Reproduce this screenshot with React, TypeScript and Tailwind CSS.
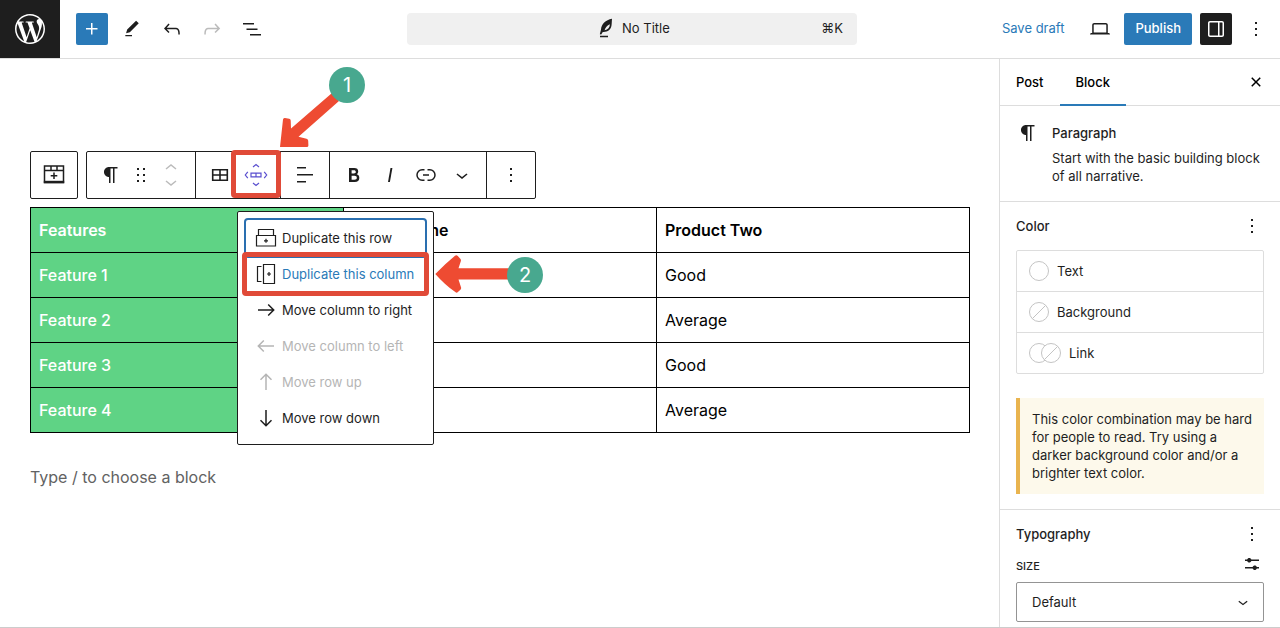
import type { ReactNode } from 'react'
import { SiWordpress } from 'react-icons/si'

const paths = {
  plus: 'M11 12.5V17.5H12.5V12.5H17.5V11H12.5V6H11V11H6V12.5H11Z',
  edit: 'M20.1 5.1L16.9 2 6.2 12.7l-1.3 4.4 4.5-1.3L20.1 5.1zM4 20.8h8v-1.5H4v1.5z',
  undo: 'M18.3 11.7c-.6-.6-1.4-.9-2.3-.9H6.7l2.9-3.3-1.1-1-4.5 5L8.5 16l1-1-2.7-2.7H16c.5 0 .9.2 1.3.5 1 1 1 3.4 1 4.5v.3h1.5v-.2c0-1.5 0-4.3-1.5-5.7z',
  redo: 'M15.6 6.5l-1.1 1 2.9 3.3H8c-.9 0-1.7.3-2.3.9-1.4 1.5-1.4 4.2-1.4 5.6v.2h1.5v-.3c0-1.1 0-3.5 1-4.5.3-.3.7-.5 1.3-.5h9.2L14.5 15l1.1 1.1 4.6-4.6-4.6-5z',
  listView: 'M3 6h11v1.5H3V6Zm3.5 5.5h11V13h-11v-1.5ZM21 17H10v1.5h11V17Z',
  desktop: 'M20.5 16h-.7V8c0-1.1-.9-2-2-2H6.2c-1.1 0-2 .9-2 2v8h-.7c-.8 0-1.5.7-1.5 1.5h20c0-.8-.7-1.5-1.5-1.5zM5.7 8c0-.3.2-.5.5-.5h11.6c.3 0 .5.2.5.5v7.6H5.7V8z',
  drawer: 'M18 4H6c-1.1 0-2 .9-2 2v12c0 1.1.9 2 2 2h12c1.1 0 2-.9 2-2V6c0-1.1-.9-2-2-2zm-4 14.5H6c-.3 0-.5-.2-.5-.5V6c0-.3.2-.5.5-.5h8v13zm4.5-.5c0 .3-.2.5-.5.5h-2.5v-13H18c.3 0 .5.2.5.5v12z',
  more: 'M13 19h-2v-2h2v2zm0-6h-2v-2h2v2zm0-6h-2V5h2v2z',
  close: 'M12 13.06l3.712 3.713 1.061-1.06L13.061 12l3.712-3.712-1.06-1.06L12 10.938 8.288 7.227l-1.061 1.06L10.939 12l-3.712 3.712 1.06 1.061L12 13.061z',
  paragraph: 'm9.996 14v-.225l.004 0v6.225h1.5v-14.5h2.5v14.5h1.5v-14.5h3v-1.5h-8.504c-2.761 0-5 2.239-5 5 0 2.761 2.239 5 5 5z',
  drag: 'M8 7h2V5H8v2zm0 6h2v-2H8v2zm0 6h2v-2H8v2zm6-14v2h2V5h-2zm0 8h2v-2h-2v2zm0 6h2v-2h-2v2z',
  chevronDown: 'M17.5 11.6L12 16l-5.5-4.4.9-1.2L12 14l4.5-3.6 1 1.2z',
  alignLeft: 'M13 5.5H4V4h9v1.5Zm7 7H4V11h16v1.5Zm-7 7H4V18h9v1.5Z',
  bold: 'M14.7 11.3c1-.6 1.5-1.6 1.5-3 0-2.3-1.3-3.4-4-3.4H7v14h5.8c1.4 0 2.5-.3 3.3-1 .8-.7 1.2-1.7 1.2-2.9.1-1.9-.8-3.1-2.6-3.7zm-5.1-4h2.3c.6 0 1.1.1 1.4.4.3.3.5.7.5 1.2s-.2 1-.5 1.2c-.3.3-.8.4-1.4.4H9.6V7.3zm4.6 9c-.4.3-1 .4-1.7.4H9.6v-3.9h2.9c.7 0 1.3.2 1.7.5.4.3.6.8.6 1.5s-.2 1.2-.6 1.5z',
  italic: 'M12.5 5L10 19h1.9l2.5-14z',
  settings: 'm19 7.5h-7.628c-.309-.874-1.142-1.5-2.122-1.5-.98 0-1.813.626-2.122 1.5h-2.128v1.5h2.128c.309.874 1.142 1.5 2.122 1.5.98 0 1.813-.626 2.122-1.5h7.628z M19 15h-2.128c-.309-.874-1.142-1.5-2.122-1.5s-1.813.626-2.122 1.5h-7.628v1.5h7.628c.309.874 1.142 1.5 2.122 1.5s1.813-.626 2.122-1.5h2.128z',
  feather: 'M18 1.800C11.500 3 7.400 7 7 12.500L5.800 17.200l1.400.4 1.600-2.600c5 .3 8-2.300 8.700-6.400.3-2 .3-4.600.5-6.800zM15.900 7.200c-.1 3.300-1.900 5.500-5.300 6 .6-2.300 2.600-4.800 5.300-6zM6 18.700h8v1.500H6z',
}

interface IconProps {
  name: keyof typeof paths
  className?: string
}

function Icon({ name, className = 'size-6' }: IconProps) {
  return (
    <svg viewBox="0 0 24 24" fill="currentColor" className={`shrink-0 ${className}`} aria-hidden="true">
      <path d={paths[name]} fillRule="evenodd" />
    </svg>
  )
}

function LineIcon({ d, width = 1.5 }: { d: string; width?: number }) {
  return (
    <svg viewBox="0 0 24 24" fill="none" stroke="currentColor" strokeWidth={width} className="size-6 shrink-0" aria-hidden="true">
      <path d={d} />
    </svg>
  )
}

interface IconButtonProps {
  label: string
  className?: string
  children: ReactNode
}

function IconButton({ label, className = 'size-8', children }: IconButtonProps) {
  return (
    <button type="button" aria-label={label} className={`flex shrink-0 items-center justify-center ${className}`}>
      {children}
    </button>
  )
}

function Header() {
  return (
    <header className="flex items-center border-b border-[#ddd]">
      <a href="#" aria-label="View posts" className="flex h-[58px] w-[60px] shrink-0 items-center justify-center bg-[#1e1e1e] text-white">
        <SiWordpress className="size-[30px]" />
      </a>
      <div className="flex gap-2 pl-4">
        <IconButton label="Add block" className="size-8 rounded-xs bg-[#2a7ab8] text-white"><Icon name="plus" /></IconButton>
        <IconButton label="Tools"><Icon name="edit" className="size-5" /></IconButton>
        <IconButton label="Undo"><Icon name="undo" /></IconButton>
        <IconButton label="Redo" className="size-8 text-[#bbb]"><Icon name="redo" /></IconButton>
        <IconButton label="Document overview"><Icon name="listView" /></IconButton>
      </div>
      <button type="button" className="mx-auto flex h-8 w-[450px] items-center rounded-sm bg-[#f0f0f0] px-3.5">
        <span className="w-8" />
        <span className="flex flex-1 items-center justify-center gap-1">
          <Icon name="feather" />
          No Title
        </span>
        <span className="w-8 text-right">⌘K</span>
      </button>
      <div className="flex items-center gap-2 pr-2">
        <button type="button" className="px-1.5 text-[#2a7ab8]">Save draft</button>
        <IconButton label="Preview" className="ml-1.5 size-8"><Icon name="desktop" /></IconButton>
        <button type="button" className="h-8 rounded-xs bg-[#2a7ab8] px-[11px] font-medium text-white">Publish</button>
        <IconButton label="Settings" className="size-8 rounded-xs bg-[#1e1e1e] text-white"><Icon name="drawer" /></IconButton>
        <IconButton label="Options"><Icon name="more" /></IconButton>
      </div>
    </header>
  )
}

const menuItems = [
  { label: 'Duplicate this row', d: 'M4.500 9V3.500h15V9M2.500 9.500h19v10.500h-19zM12 12.800v4M10 14.800h4', width: 1.2 },
  { label: 'Duplicate this column', d: 'M7.500 4.500H3.500v15h4M9.500 2.500h11v19h-11zM15 10v4M13 12h4', width: 1.2 },
  { label: 'Move column to right', d: 'M4 12h15.500M14.200 6.500l5.500 5.500-5.500 5.500' },
  { label: 'Move column to left', d: 'M20 12H4.500M9.800 6.500L4.300 12l5.500 5.500', disabled: true },
  { label: 'Move row up', d: 'M12 20V4.500M6.500 9.800L12 4.300l5.500 5.500', disabled: true },
  { label: 'Move row down', d: 'M12 4v15.500M6.500 14.200l5.500 5.500 5.500-5.500' },
]

function MoveMenu() {
  return (
    <ul className="absolute top-[59px] -left-px z-10 w-[197px] rounded-xs border border-[#1e1e1e] bg-white p-2">
      {menuItems.map((item, i) => (
        <li key={item.label} className="relative">
          <button
            type="button"
            disabled={item.disabled}
            className={`flex h-9 w-full items-center gap-1 rounded-xs px-2 whitespace-nowrap disabled:text-[#b5b5b5] ${i === 0 ? 'ring-2 ring-[#2a6fb0]' : ''}`}
          >
            <LineIcon d={item.d} width={item.width} />
            <span className={`pt-0.5 ${i === 1 ? 'text-[#2a7ab8]' : ''}`}>{item.label}</span>
          </button>
          {i === 1 && <Highlight className="-inset-1" />}
        </li>
      ))}
    </ul>
  )
}

function Highlight({ className }: { className: string }) {
  return <span className={`pointer-events-none absolute z-10 rounded-sm border-5 border-[#e04a38] ${className}`} />
}

function ToolGroup({ children }: { children: ReactNode }) {
  return <div className="relative flex border-r border-[#1e1e1e] px-1.5 last:border-r-0">{children}</div>
}

function Toolbar() {
  const tool = 'h-[46px] w-9'
  return (
    <div className="flex gap-2">
      <IconButton label="Table" className="size-12 rounded-xs border border-[#1e1e1e]">
        <svg viewBox="0 0 24 24" className="size-6" fill="none" stroke="currentColor" strokeWidth="1.5" aria-hidden="true">
          <path d="M2.500 3h19v16.500h-19zM2.500 7.500h19M9 3v4.500M15 3v4.500M12 9.500v6.500M8.700 12.700h6.600" />
          <path d="M1.800 19h20.400" strokeWidth="2.4" />
        </svg>
      </IconButton>
      <div className="flex rounded-xs border border-[#1e1e1e]">
        <ToolGroup>
          <IconButton label="Paragraph" className={tool}><Icon name="paragraph" /></IconButton>
          <IconButton label="Drag" className="h-[46px] w-6"><Icon name="drag" /></IconButton>
          <IconButton label="Move up or down" className="h-[46px] w-9 text-[#bbb]">
            <svg viewBox="0 0 24 40" fill="none" stroke="currentColor" strokeWidth="1.5" className="h-10 w-6" aria-hidden="true">
              <path d="M7 14l5-4 5 4M7 26l5 4 5-4" />
            </svg>
          </IconButton>
        </ToolGroup>
        <ToolGroup>
          <IconButton label="Edit table" className={tool}>
            <LineIcon d="M4.700 6.700h14.600v10.600H4.700zM12 6.700v10.600M4.700 12h14.600" width={1.6} />
          </IconButton>
          <IconButton label="Duplicate or move" className="h-[46px] w-9 text-[#5a4fcf]">
            <LineIcon d="M7 10.200h10v3.600H7zM12 10.200v3.600M3.800 8.800L1.300 12l2.500 3.200M20.200 8.800l2.500 3.200-2.500 3.200M9 4l3-2.500L15 4M9 20l3 2.500L15 20" width={1.2} />
          </IconButton>
          <Highlight className="-top-0.5 left-[35px] h-12 w-[50px]" />
          <div className="absolute top-0 left-[42px]"><MoveMenu /></div>
        </ToolGroup>
        <ToolGroup>
          <IconButton label="Align text" className={tool}><Icon name="alignLeft" /></IconButton>
        </ToolGroup>
        <ToolGroup>
          <IconButton label="Bold" className={tool}><Icon name="bold" /></IconButton>
          <IconButton label="Italic" className={tool}><Icon name="italic" /></IconButton>
          <IconButton label="Link" className={tool}>
            <LineIcon d="M10.500 6.800H8.200a5.200 5.200 0 0 0 0 10.400h2.300M13.500 6.800h2.300a5.200 5.200 0 0 1 0 10.400h-2.300M9 12h6" />
          </IconButton>
          <IconButton label="More" className={tool}><Icon name="chevronDown" /></IconButton>
        </ToolGroup>
        <ToolGroup>
          <IconButton label="Options" className={tool}><Icon name="more" /></IconButton>
        </ToolGroup>
      </div>
    </div>
  )
}

const rows = [
  ['Feature 1', '', 'Good'],
  ['Feature 2', '', 'Average'],
  ['Feature 3', '', 'Good'],
  ['Feature 4', '', 'Average'],
]

function FeatureTable() {
  const cell = 'border border-black p-2 text-left leading-7'
  return (
    <table className="mt-2 w-full table-fixed border-collapse text-base text-black">
      <thead>
        <tr>
          <th className={`${cell} bg-[#5fd385] font-semibold text-white`}>Features</th>
          <th className={`${cell} font-semibold`}>Product One</th>
          <th className={`${cell} font-semibold`}>Product Two</th>
        </tr>
      </thead>
      <tbody>
        {rows.map(([feature, one, two]) => (
          <tr key={feature}>
            <td className={`${cell} bg-[#5fd385] font-medium text-white`}>{feature}</td>
            <td className={cell}>{one}</td>
            <td className={cell}>{two}</td>
          </tr>
        ))}
      </tbody>
    </table>
  )
}

function Step({ n, className }: { n: number; className: string }) {
  return (
    <span className={`absolute z-20 flex size-9 items-center justify-center rounded-full bg-[#48a88f] text-xl text-white ${className}`}>
      {n}
    </span>
  )
}

function Canvas() {
  return (
    <main className="relative min-w-0 flex-1 pt-[92px] pr-[29px] pl-[30px]">
      <Toolbar />
      <FeatureTable />
      <input
        aria-label="Empty block"
        placeholder="Type / to choose a block"
        className="mt-7 h-8 w-full text-base outline-none placeholder:text-[#626262]"
      />
      <svg viewBox="0 0 70 60" className="absolute top-[30px] left-[279px] z-20 h-[60px] w-[70px]" fill="#ee4b32" aria-hidden="true">
        <path d="M1 58L4 30.500q.2-1.800 2-1.500l4.200.8q1.400.3 1.500 1.800l.3 8L53 4l7 8-40.500 35.800 8 2q1.700.4 1.700 2l.2 4.700q0 1.500-1.600 1.500z" />
      </svg>
      <Step n={1} className="top-2 left-[329px]" />
      <svg viewBox="0 0 80 40" className="absolute top-[195px] left-[435px] z-20 h-10 w-20" fill="#ee4b32" aria-hidden="true">
        <path d="M.3 20Q10 10 20 1.800q1.500-1.200 2.800.3l2.500 2.700q1 1.200.5 2.500L23.500 14.300h52v11.200h-52l2.500 7.700q.5 1.500-.6 2.600l-2.500 2.300q-1.200 1.100-2.600 0Q10 31 .3 20z" />
      </svg>
      <Step n={2} className="top-[198px] left-[507px]" />
    </main>
  )
}

function Swatch({ empty, className = '' }: { empty?: boolean; className?: string }) {
  return (
    <svg viewBox="0 0 20 20" fill="white" stroke="#c4c4c4" className={`size-5 ${className}`} aria-hidden="true">
      <circle cx="10" cy="10" r="9.5" />
      {empty && <path d="M3.500 16.500l13-13" />}
    </svg>
  )
}

function PanelTitle({ children }: { children: string }) {
  return (
    <div className="flex h-12 items-center justify-between">
      <h2 className="pt-0.5 font-medium">{children}</h2>
      <IconButton label={`${children} options`} className="size-6"><Icon name="more" /></IconButton>
    </div>
  )
}

function Sidebar() {
  return (
    <aside className="w-[281px] shrink-0 border-l border-[#ddd]">
      <div className="flex h-[47px] items-stretch border-b border-[#ddd] pr-3 font-medium text-black">
        <button type="button" className="pt-0.5 pr-4 pl-4">Post</button>
        <button type="button" className="-mb-px border-b-2 border-[#2a7ab8] px-4 pt-0.5">Block</button>
        <IconButton label="Close settings" className="ml-auto w-6"><Icon name="close" /></IconButton>
      </div>
      <section className="flex gap-3 border-b border-[#ddd] px-4 pt-[15px] pb-4">
        <Icon name="paragraph" />
        <div className="leading-[18px]">
          <h2 className="leading-6 font-medium">Paragraph</h2>
          <p className="mt-1">Start with the basic building block of all narrative.</p>
        </div>
      </section>
      <section className="border-b border-[#ddd] px-4 pb-[15px]">
        <PanelTitle>Color</PanelTitle>
        <div className="divide-y divide-[#ddd] rounded-xs border border-[#ddd]">
          <button type="button" className="flex h-[41px] w-full items-center gap-2 px-3">
            <Swatch />
            <span className="pt-0.5">Text</span>
          </button>
          <button type="button" className="flex h-[41px] w-full items-center gap-2 px-3">
            <Swatch empty />
            <span className="pt-0.5">Background</span>
          </button>
          <button type="button" className="flex h-10 w-full items-center gap-2 px-3">
            <span className="flex"><Swatch /><Swatch empty className="-ml-2" /></span>
            <span className="pt-0.5">Link</span>
          </button>
        </div>
        <p className="mt-6 border-l-4 border-[#e9b44f] bg-[#fdf9eb] p-3 leading-[18px]">
          This color combination may be hard for people to read. Try using a darker background color and/or a brighter text color.
        </p>
      </section>
      <section className="px-4">
        <PanelTitle>Typography</PanelTitle>
        <div className="-mt-1.5 flex h-[30px] items-start justify-between">
          <label htmlFor="font-size" className="pt-1.5 text-[11px] font-medium uppercase">Size</label>
          <IconButton label="Set custom size" className="size-6"><Icon name="settings" /></IconButton>
        </div>
        <div className="relative">
          <select id="font-size" className="h-10 w-full appearance-none rounded-xs border border-[#949494] bg-white px-[15px] pt-0.5">
            <option>Default</option>
          </select>
          <Icon name="chevronDown" className="pointer-events-none absolute top-2.5 right-[11px] size-5" />
        </div>
      </section>
    </aside>
  )
}

export default function App() {
  return (
    <div className="flex min-h-screen flex-col border-b border-[#ccc] bg-white font-[Inter,sans-serif] text-[13px] text-[#1e1e1e]">
      <Header />
      <div className="flex flex-1">
        <Canvas />
        <Sidebar />
      </div>
    </div>
  )
}
